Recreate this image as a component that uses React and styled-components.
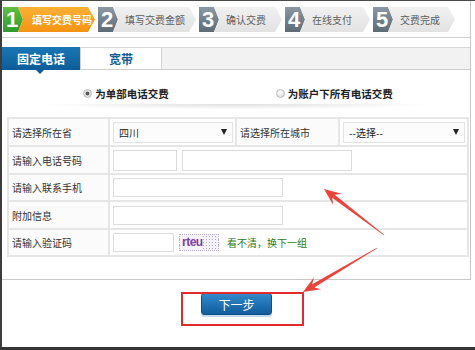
import React from "react";
import styled, { createGlobalStyle } from "styled-components";

const Global = createGlobalStyle`
  html, body { margin: 0; padding: 0; background: #fff; }
  body { font-family: "Noto Sans CJK SC", "Noto Sans", sans-serif; }
  * { box-sizing: border-box; }
`;

const Screen = styled.div`
  position: relative;
  width: 475px;
  height: 350px;
  background: #fff;
  border-left: 2px solid #3d3d3d;
  border-top: 1px solid #4a4a4a;
  border-bottom: 3px solid #363636;
  overflow: hidden;
  display: flex;
  flex-direction: column;
`;

const Frame = styled.div`
  width: 469px;
  border-right: 1px solid #c9c9c9;
`;

const Header = styled.div`
  height: 37px;
  padding: 6px 0 0 1px;
  border-bottom: 1px solid #cfcfcf;
  display: flex;
  gap: 3px;
`;

const StepWrap = styled.div`
  display: flex;
  height: 25px;
`;

const StepNum = styled.div`
  width: 20px;
  height: 25px;
  flex: none;
  display: flex;
  align-items: center;
  padding-left: 3px;
  font-family: "Liberation Sans", Arial, sans-serif;
  font-weight: bold;
  font-size: 22px;
  color: #fff;
  background: ${(p) =>
    p.$active
      ? "linear-gradient(#5fc144, #2f9a2f)"
      : "linear-gradient(#8c98a3, #5d6b77)"};
  clip-path: polygon(0 0, calc(100% - 5px) 0, 100% 50%, calc(100% - 5px) 100%, 0 100%);
`;

const StepLabel = styled.div`
  width: ${(p) => p.$w}px;
  height: 25px;
  margin-left: -5px;
  padding-left: ${(p) => (p.$active ? 14 : 12)}px;
  display: flex;
  align-items: center;
  font-size: 10px;
  font-weight: ${(p) => (p.$active ? "bold" : "normal")};
  color: ${(p) => (p.$active ? "#fff" : "#5e5e5e")};
  background: ${(p) =>
    p.$active
      ? "linear-gradient(#fbb036, #f39412)"
      : "linear-gradient(#f1f1f1, #e2e2e2)"};
  clip-path: polygon(0 0, calc(100% - 7px) 0, 100% 50%, calc(100% - 7px) 100%, 0 100%, 5px 50%);
`;

const Body = styled.div`
  padding: 9px 0 22px;
  border-bottom: 1px solid #c8c8c8;
`;

const TabBar = styled.div`
  height: 23px;
  display: flex;
  background: #f2f2f2;
  border-top: 1px solid #d8d8d8;
  border-bottom: 1px solid #cdcdcd;
`;

const Tab = styled.div`
  position: relative;
  width: ${(p) => p.$w}px;
  display: flex;
  align-items: center;
  justify-content: center;
  font-size: 12px;
  font-weight: bold;
  color: ${(p) => (p.$active ? "#fff" : "#175c93")};
  background: ${(p) => (p.$active ? "linear-gradient(#1a76b4, #0c5d99)" : "#fff")};
  border-right: 1px solid #d2d2d2;
  margin-top: ${(p) => (p.$active ? "-1px" : "0")};
  margin-bottom: ${(p) => (p.$active ? "-1px" : "0")};
  &::after {
    content: "";
    display: ${(p) => (p.$active ? "block" : "none")};
    position: absolute;
    left: 34px;
    bottom: -4px;
    border-left: 4px solid transparent;
    border-right: 4px solid transparent;
    border-top: 4px solid #0c5d99;
  }
`;

const RadioRow = styled.div`
  margin-top: 12px;
  height: 22px;
  display: flex;
  justify-content: center;
  align-items: center;
  gap: 107px;
  padding-left: 4px;
`;

const RadioItem = styled.label`
  display: flex;
  align-items: center;
  gap: 3px;
  font-size: 10.5px;
  font-weight: bold;
  color: #222;
`;

const RadioDot = styled.span`
  width: 9px;
  height: 9px;
  border-radius: 50%;
  border: 1px solid #b9b9b9;
  background: ${(p) =>
    p.$on
      ? "radial-gradient(circle, #555 0 1.6px, #dcdcdc 2.2px, #f3f3f3 100%)"
      : "radial-gradient(circle at 40% 35%, #fdfdfd, #d6d6d6)"};
`;

const Shadow = styled.div`
  height: 6px;
  margin: 0 14px;
  background: radial-gradient(ellipse 50% 100% at 50% 0, rgba(0, 0, 0, 0.13), rgba(0, 0, 0, 0) 90%);
`;

const Table = styled.table`
  margin: 7px 0 0 5px;
  width: 460px;
  table-layout: fixed;
  border-collapse: collapse;
  font-size: 10px;
  color: #333;
`;

const Cell = styled.td`
  height: ${(p) => p.$h || 28}px;
  padding: 0 3px;
  border: 2px solid #e6e6e6;
  vertical-align: middle;
  background: ${(p) => (p.$label ? "#fbfbfb" : "#fff")};
  white-space: nowrap;
`;

const Fields = styled.div`
  display: flex;
  align-items: center;
  gap: ${(p) => p.$gap || 5}px;
`;

const Input = styled.div`
  width: ${(p) => p.$w}px;
  height: ${(p) => p.$h || 19}px;
  border: 1px solid #dcdcdc;
  background: #fff;
`;

const Select = styled.div`
  width: ${(p) => p.$w}px;
  height: 21px;
  border: 1px solid #e2e2e2;
  background: #fcfcfc;
  display: flex;
  align-items: center;
  justify-content: space-between;
  padding: 0 5px 0 5px;
  font-size: 10px;
  color: #222;
`;

const Caret = styled.span`
  width: 0;
  height: 0;
  border-left: 3px solid transparent;
  border-right: 3px solid transparent;
  border-top: 6px solid #222;
`;

const Captcha = styled.div`
  width: 40px;
  height: 17px;
  border: 1px dotted #b9b0c8;
  background: #f6f2f9;
  display: flex;
  align-items: center;
  padding-left: 2px;
  font-family: "Liberation Sans", Arial, sans-serif;
  font-size: 12px;
  font-weight: bold;
  letter-spacing: -0.5px;
  color: #7b3fa6;
  background-image: radial-gradient(#b5a9c5 0.6px, transparent 0.8px);
  background-size: 3px 3px;
  background-position: 28px 0;
`;

const CaptchaText = styled.span`
  background: #f6f2f9;
  line-height: 13px;
`;

const Refresh = styled.span`
  margin-left: 3px;
  color: #1f7a22;
  font-size: 10px;
`;

const Footer = styled.div`
  width: 469px;
  padding-top: 13px;
  display: flex;
  justify-content: center;
`;

const Button = styled.button`
  width: 71px;
  height: 22px;
  border: 1px solid #0b4f87;
  border-radius: 3px;
  background: linear-gradient(#3389cb, #0f5d9c);
  color: #fff;
  font-family: "Noto Sans CJK SC", sans-serif;
  font-size: 12px;
  padding: 0;
  box-shadow: 0 2px 0 #c5d8ea;
`;

const Highlight = styled.div`
  position: absolute;
  left: 179px;
  top: 291px;
  width: 123px;
  height: 34px;
  border: 2px solid #e42b2b;
  pointer-events: none;
`;

const Overlay = styled.svg`
  position: absolute;
  left: -2px;
  top: -1px;
  width: 475px;
  height: 350px;
  pointer-events: none;
`;

function arrowPoints(tx, ty, hx, hy) {
  const dx = hx - tx;
  const dy = hy - ty;
  const len = Math.hypot(dx, dy);
  const ux = dx / len;
  const uy = dy / len;
  const nx = -uy;
  const ny = ux;
  const L = 17;
  const W = 7;
  const pt = (x, y) => `${x.toFixed(1)},${y.toFixed(1)}`;
  const bx = hx - ux * L * 0.7;
  const by = hy - uy * L * 0.7;
  const cx = hx - ux * L;
  const cy = hy - uy * L;
  return [
    pt(tx + nx * 0.4, ty + ny * 0.4),
    pt(bx + nx * 2, by + ny * 2),
    pt(cx + nx * W, cy + ny * W),
    pt(hx, hy),
    pt(cx - nx * W, cy - ny * W),
    pt(bx - nx * 2, by - ny * 2),
    pt(tx - nx * 0.4, ty - ny * 0.4),
  ].join(" ");
}

const steps = [
  { n: "1", t: "填写交费号码", w: 77, active: true },
  { n: "2", t: "填写交费金额", w: 83 },
  { n: "3", t: "确认交费", w: 68 },
  { n: "4", t: "在线支付", w: 70 },
  { n: "5", t: "交费完成", w: 67 },
];

export default function App() {
  return (
    <>
      <Global />
      <Screen>
        <Frame>
          <Header>
            {steps.map((s) => (
              <StepWrap key={s.n}>
                <StepNum $active={s.active}>{s.n}</StepNum>
                <StepLabel $w={s.w} $active={s.active}>
                  {s.t}
                </StepLabel>
              </StepWrap>
            ))}
          </Header>
          <Body>
            <TabBar>
              <Tab $w={79} $active>
                固定电话
              </Tab>
              <Tab $w={81}>宽带</Tab>
            </TabBar>
            <RadioRow>
              <RadioItem>
                <RadioDot $on />
                为单部电话交费
              </RadioItem>
              <RadioItem>
                <RadioDot />
                为账户下所有电话交费
              </RadioItem>
            </RadioRow>
            <Shadow />
            <Table>
              <colgroup>
                <col style={{ width: 101 }} />
                <col style={{ width: 127 }} />
                <col style={{ width: 103 }} />
                <col style={{ width: 129 }} />
              </colgroup>
              <tbody>
                <tr>
                  <Cell $label>请选择所在省</Cell>
                  <Cell>
                    <Select $w={120}>
                      <span>四川</span>
                      <Caret />
                    </Select>
                  </Cell>
                  <Cell $label>请选择所在城市</Cell>
                  <Cell>
                    <Select $w={122}>
                      <span>--选择--</span>
                      <Caret />
                    </Select>
                  </Cell>
                </tr>
                <tr>
                  <Cell $label>请输入电话号码</Cell>
                  <Cell colSpan={3}>
                    <Fields>
                      <Input $w={64} $h={21} />
                      <Input $w={170} $h={21} />
                    </Fields>
                  </Cell>
                </tr>
                <tr>
                  <Cell $label $h={27}>请输入联系手机</Cell>
                  <Cell colSpan={3} $h={27}>
                    <Input $w={170} />
                  </Cell>
                </tr>
                <tr>
                  <Cell $label>附加信息</Cell>
                  <Cell colSpan={3}>
                    <Input $w={170} />
                  </Cell>
                </tr>
                <tr>
                  <Cell $label $h={27}>请输入验证码</Cell>
                  <Cell colSpan={3} $h={27}>
                    <Fields>
                      <Input $w={61} />
                      <Captcha>
                        <CaptchaText>rteu</CaptchaText>
                      </Captcha>
                      <Refresh>看不清，换下一组</Refresh>
                    </Fields>
                  </Cell>
                </tr>
              </tbody>
            </Table>
          </Body>
        </Frame>
        <Footer>
          <Button>下一步</Button>
        </Footer>
        <Highlight />
        <Overlay viewBox="0 0 475 350">
          <polygon points={arrowPoints(384, 235, 324, 189)} fill="#e8453c" />
          <polygon points={arrowPoints(377, 248, 303, 292)} fill="#e8453c" />
        </Overlay>
      </Screen>
    </>
  );
}
